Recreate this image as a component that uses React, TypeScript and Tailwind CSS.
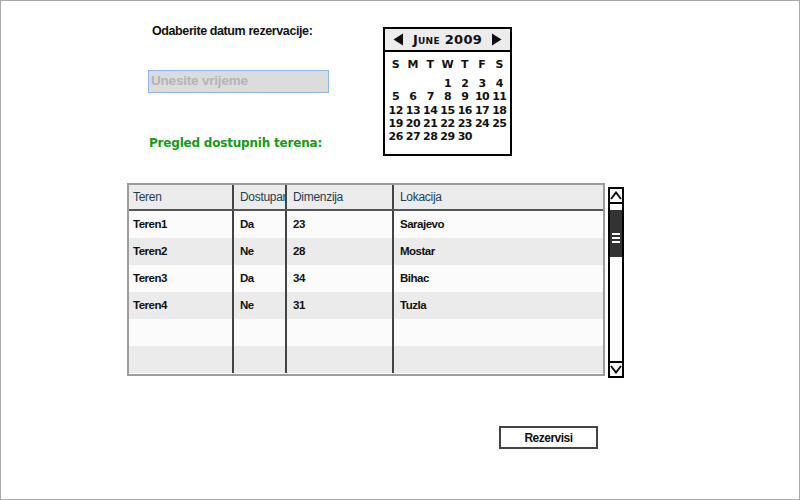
import React from 'react';

const arial = "font-['Liberation_Sans','Arial',sans-serif]";
const sketch = "font-['DejaVu_Sans','Verdana',sans-serif]";

const rows = [
  ['Teren1', 'Da', '23', 'Sarajevo'],
  ['Teren2', 'Ne', '28', 'Mostar'],
  ['Teren3', 'Da', '34', 'Bihac'],
  ['Teren4', 'Ne', '31', 'Tuzla'],
  ['', '', '', ''],
  ['', '', '', ''],
];

const days = ['S', 'M', 'T', 'W', 'T', 'F', 'S'];
const dates: (number | null)[] = [null, null, null, ...Array.from({ length: 30 }, (_, i) => i + 1)];

const Calendar = () => (
  <div className={`w-[129px] h-[129px] border-2 border-black bg-white flex flex-col ${sketch}`}>
    {/* month header */}
    <div className="h-[23px] bg-[#ececec] border-b-2 border-black flex items-center justify-between px-[8px]">
      <svg width="11" height="13" viewBox="0 0 11 13"><path d="M10 0.5 L0.5 6.5 L10 12.5 Z" fill="#111" /></svg>
      <span className="text-[13px] font-bold text-[#111] [font-variant:small-caps] tracking-[0.3px]">June 2009</span>
      <svg width="11" height="13" viewBox="0 0 11 13"><path d="M1 0.5 L10.5 6.5 L1 12.5 Z" fill="#111" /></svg>
    </div>
    <div className="grid grid-cols-7 px-[2px] mt-[6px] text-[11px] font-bold text-[#111] leading-[13px] text-center">
      {days.map((d, i) => <span key={i}>{d}</span>)}
    </div>
    <div className="grid grid-cols-7 px-[2px] mt-[6px] text-[11px] font-bold text-[#111] leading-[13.3px] text-center tracking-[-0.5px]">
      {dates.map((d, i) => <span key={i}>{d ?? ''}</span>)}
    </div>
  </div>
);

const Scrollbar = () => (
  <div className="w-[16px] h-[191px] border-2 border-black bg-white flex flex-col">
    <div className="h-[15px] border-b-2 border-black flex items-center justify-center">
      <svg width="12" height="9" viewBox="0 0 12 9"><path d="M1 8 L6 1.5 L11 8" stroke="#111" strokeWidth="2" fill="none" /></svg>
    </div>
    <div className="h-[6px]" />
    <div className="h-[47px] bg-[#333] flex flex-col items-center justify-center gap-[2px] pt-[8px]">
      <div className="w-[8px] h-[2px] bg-white" />
      <div className="w-[8px] h-[2px] bg-white" />
      <div className="w-[8px] h-[2px] bg-white" />
    </div>
    <div className="flex-1" />
    <div className="h-[15px] border-t-2 border-black flex items-center justify-center">
      <svg width="12" height="9" viewBox="0 0 12 9"><path d="M1 1 L6 7.5 L11 1" stroke="#111" strokeWidth="2" fill="none" /></svg>
    </div>
  </div>
);

export default function App() {
  return (
    <div className={`w-[800px] h-[500px] border border-[#a8a8a8] bg-white flex flex-col overflow-hidden ${arial}`}>
      {/* top: date picker */}
      <div className="flex pl-[147px] pt-[21px]">
        <div className="w-[235px] flex flex-col">
          <div className="ml-[4px] text-[12.5px] leading-[18px] font-bold text-[#111] tracking-[-0.4px]">Odaberite datum rezervacije:</div>
          <div className="mt-[30px] w-[181px] h-[23px] bg-[#dcdcdc] border border-[#8fb6ee] flex items-center px-[2px] text-[13.5px] font-bold text-[#b4b4b4] tracking-[-0.2px]">
            Unesite vrijeme
          </div>
          <div className={`mt-[41px] ml-[1px] text-[12px] leading-[18px] font-bold text-[#169b16] tracking-[-0.2px] ${sketch}`}>Pregled dostupnih terena:</div>
        </div>
        <div className="mt-[5px]">
          <Calendar />
        </div>
      </div>

      {/* table with scrollbar */}
      <div className="flex items-start mt-[27px] ml-[126px]">
        <div className="w-[478px] h-[193px] border-2 border-[#9c9c9c] overflow-hidden bg-white">
          <div className="grid grid-cols-[103px_53px_107px_1fr] h-[26px] bg-[#ececec] border-b-2 border-[#555] text-[12px] text-[#1e3d50] tracking-[-0.3px]">
            <div className="pl-[4px] flex items-center">Teren</div>
            <div className="pl-[6px] flex items-center border-l-2 border-[#444] overflow-hidden whitespace-nowrap">Dostupan</div>
            <div className="pl-[6px] flex items-center border-l-2 border-[#444]">Dimenzija</div>
            <div className="pl-[6px] flex items-center border-l-2 border-[#444]">Lokacija</div>
          </div>
          {rows.map((r, i) => (
            <div
              key={i}
              className={`grid grid-cols-[103px_53px_107px_1fr] h-[27px] text-[11.5px] font-bold text-[#111] tracking-[-0.5px] ${i % 2 === 1 ? 'bg-[#ebebeb]' : 'bg-[#fbfbfb]'}`}
            >
              <div className="pl-[4px] flex items-center">{r[0]}</div>
              <div className="pl-[6px] flex items-center border-l-2 border-[#444]">{r[1]}</div>
              <div className="pl-[6px] flex items-center border-l-2 border-[#444]">{r[2]}</div>
              <div className="pl-[6px] flex items-center border-l-2 border-[#444]">{r[3]}</div>
            </div>
          ))}
        </div>
        <div className="mt-[4px] ml-[3px]">
          <Scrollbar />
        </div>
      </div>

      {/* action */}
      <div className="mt-[48px] ml-[498px]">
        <button className="w-[99px] h-[23px] border-2 border-[#444] bg-white flex items-center justify-center text-[12px] font-bold text-[#111] tracking-[-0.5px]">
          Rezervisi
        </button>
      </div>
    </div>
  );
}
